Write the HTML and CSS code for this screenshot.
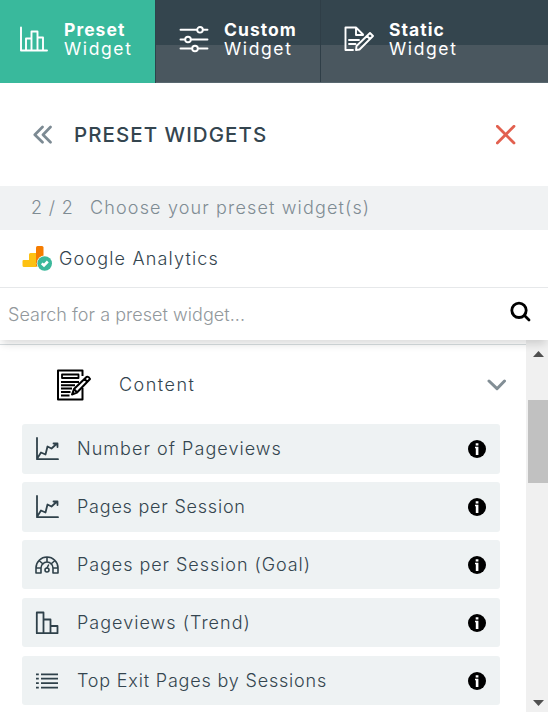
FILE: index.html
```html
<!DOCTYPE html>
<html lang="en">
<head>
  <meta charset="utf-8">
  <title>Preset Widgets</title>
  <link rel="stylesheet" href="styles.css">
</head>
<body>
  <svg class="symbols">
    <symbol id="line-chart" viewBox="0 0 24 24">
      <path d="M2 1V22.200H23M2.500 21L6 15.500L10.500 17.500L12.500 9.500L16.500 11.500L22 6.500M18.500 6.500H22.500V10"/>
    </symbol>
    <symbol id="info" viewBox="0 0 18 18">
      <circle cx="9" cy="9" r="9" fill="#000" stroke="none"/>
      <path d="M7.700 3.300h2.700v2.200H7.700zM7 6.800h3.400v8.200H7.800V8.300H7z" fill="#fff" stroke="none"/>
    </symbol>
  </svg>

  <div class="tabs">
    <div class="tab active">
      <svg class="tab-icon" width="30" height="28" viewBox="0 0 30 28">
        <path d="M3 2.500V25.500H29M8 25V13.500H13.500M13.500 25V6.500H19.500V25M19.500 12.500H25V25"/>
      </svg>
      <div class="tab-text"><b>Preset</b><span>Widget</span></div>
    </div>
    <div class="tab custom">
      <svg class="tab-icon" width="30" height="28" viewBox="0 0 30 28">
        <path d="M1.500 4.800H18M24 4.800H28.500M1.500 14.500H6M12 14.500H28.500M1.500 23.500H13M19 23.500H28.500"/>
        <circle cx="21" cy="4.800" r="2.800"/>
        <circle cx="9" cy="14.500" r="2.800"/>
        <circle cx="16" cy="23.500" r="2.800"/>
      </svg>
      <div class="tab-text"><b>Custom</b><span>Widget</span></div>
    </div>
    <div class="tab static">
      <svg class="tab-icon" width="30" height="28" viewBox="0 0 30 28">
        <path d="M19 9.500L12 2.500H1.500V25H9M12 2.500V10H19M5 15H15M5 19H11.500M12 25L12.500 21L26 8L29 11L15.500 24.500L12 25M23 11L26 14"/>
      </svg>
      <div class="tab-text"><b>Static</b><span>Widget</span></div>
    </div>
  </div>

  <div class="title-bar">
    <svg class="back" width="20" height="20" viewBox="0 0 20 20">
      <path d="M10.500 2L2.800 9.700L10.500 17.200M18.500 2L11 9.700L18.500 17.200"/>
    </svg>
    <h1>PRESET WIDGETS</h1>
    <svg class="close" width="20" height="20" viewBox="0 0 20 20">
      <path d="M1.300 1.300L18 18M18 1.300L1.300 18"/>
    </svg>
  </div>

  <div class="step">
    <span class="count">2 / 2</span>
    <span class="choose">Choose your preset widget(s)</span>
  </div>

  <div class="source">
    <svg width="32" height="28" viewBox="0 0 32 28">
      <rect x="14" y="1" width="7.500" height="21" rx="1.500" fill="#f57c00"/>
      <path d="M8.500 8H14V22H2Q.500 22 .500 20.500V16Q.500 15 1.500 15H7V9.500Q7 8 8.500 8Z" fill="#fdc113"/>
      <circle cx="22.700" cy="18.500" r="8" fill="#fff"/>
      <circle cx="22.700" cy="18.500" r="7.300" fill="#3bb89b"/>
      <path d="M19.800 18.300L22 20.500L25.800 16.500" fill="none" stroke="#fff" stroke-width="2.600"/>
    </svg>
    <span class="source-name">Google Analytics</span>
  </div>

  <div class="search">
    <input type="text" placeholder="Search for a preset widget...">
    <svg width="22" height="22" viewBox="0 0 22 22">
      <circle cx="10" cy="9.300" r="7.200"/>
      <path d="M15.500 14.500L20 19"/>
    </svg>
  </div>

  <div class="panel">
    <div class="list">
      <div class="group">
        <svg class="group-icon" width="36" height="34" viewBox="0 0 36 34">
          <path d="M26.500 8V2.500H2V31.500H26.500V20" stroke-width="2"/>
          <path d="M6 6.500H22.500V10H6Z" stroke-width="1.800"/>
          <path d="M5 14H23M5 17.200H19M5 20.500H16M5 24H14.500M5 27.500H13.500" stroke-width="1.900"/>
          <path d="M16 26.500L18 21L30.500 9Q32.500 8 34 11L21 24.500ZM28.500 11L31.500 14M18 21L21 24.500" stroke-width="2" fill="#fff"/>
        </svg>
        <span class="group-name">Content</span>
        <svg class="arrow" width="20" height="13" viewBox="0 0 20 13">
          <path d="M2 2L10 9.700L17.500 2"/>
        </svg>
      </div>

      <div class="widget">
        <svg class="widget-icon"><use href="#line-chart"/></svg>
        <span class="pageviews">Number of Pageviews</span>
        <svg class="info"><use href="#info"/></svg>
      </div>
      <div class="widget">
        <svg class="widget-icon"><use href="#line-chart"/></svg>
        <span class="session">Pages per Session</span>
        <svg class="info"><use href="#info"/></svg>
      </div>
      <div class="widget">
        <svg class="widget-icon gauge" viewBox="0 0 24 24">
          <path d="M1 20V15A11 11 0 0 1 23 15V20H18V15A6 6 0 0 0 6 15V20ZM1 15H6M18 15H23M4 7.500L8 11M20 7.500L16 11M12 4V9M12 15L13.500 12"/>
          <circle cx="12" cy="17" r="2"/>
        </svg>
        <span class="goal">Pages per Session (Goal)</span>
        <svg class="info"><use href="#info"/></svg>
      </div>
      <div class="widget">
        <svg class="widget-icon" viewBox="0 0 24 24">
          <path d="M1.800 1.500H8.500V22.200H1.800ZM8.500 8.500H15.500V22.200H8.500ZM15.500 15H22.500V22.200H15.500Z"/>
        </svg>
        <span class="trend">Pageviews (Trend)</span>
        <svg class="info"><use href="#info"/></svg>
      </div>
      <div class="widget">
        <svg class="widget-icon rows" viewBox="0 0 24 24">
          <path d="M1 5.300H3.800M6 5.300H23M1 9.700H3.800M6 9.700H23M1 14.200H3.800M6 14.200H23M1 18.700H3.800M6 18.700H23"/>
        </svg>
        <span class="exit">Top Exit Pages by Sessions</span>
        <svg class="info"><use href="#info"/></svg>
      </div>
    </div>

    <div class="scrollbar">
      <svg width="11" height="6" viewBox="0 0 11 6"><path d="M0 6L5.500 0L11 6Z"/></svg>
      <div class="thumb"></div>
      <svg width="11" height="6" viewBox="0 0 11 6"><path d="M0 0L5.500 6L11 0Z"/></svg>
    </div>
  </div>
</body>
</html>
```
FILE: styles.css
```css
* {
  box-sizing: border-box;
}

body {
  margin: 0;
  height: 712px;
  overflow: hidden;
  display: flex;
  flex-direction: column;
  font-family: Inter, "Open Sans", sans-serif;
  font-size: 18px;
  font-weight: 300;
  line-height: 22px;
  color: #34454f;
  background-color: #fff;
}

span, h1, b {
  white-space: nowrap;
}

svg {
  flex: none;
}

.symbols {
  display: none;
}

.tabs {
  display: flex;
  flex: none;
  height: 83px;
  color: #fff;
  background: linear-gradient(#34454e 45px, #4a575f 45px);
  border-bottom: 1px solid #596870;
}

.tab {
  display: flex;
  height: 82px;
  padding: 20px 0 0 18px;
}

.tab.active {
  width: 156px;
  height: 83px;
  background-color: #39b99c;
  border-right: 1px solid #2c444b;
}

.tab.custom {
  width: 165px;
  padding-left: 23px;
  border-right: 1px solid #2f3e47;
}

.tab.static {
  padding-left: 23px;
}

.tab-icon {
  margin-top: 5px;
  fill: none;
  stroke: #fff;
  stroke-width: 1.9;
  stroke-linecap: round;
  stroke-linejoin: round;
}

.tab-text {
  margin-left: 16px;
  font-size: 17.5px;
  line-height: 19px;
}

.tab.custom .tab-text,
.tab.static .tab-text {
  margin-left: 15px;
}

.tab-text b,
.tab-text span {
  display: block;
}

.tab-text b {
  font-weight: 700;
  letter-spacing: 1.05px;
}

.tab-text span {
  font-weight: 400;
  letter-spacing: 1.6px;
}

.title-bar {
  display: flex;
  flex: none;
  align-items: center;
  height: 103px;
  padding: 0 32px;
}

.title-bar h1 {
  margin: 1px 0 0 22px;
  font-size: 20.5px;
  font-weight: 500;
  letter-spacing: 1.05px;
}

.back {
  fill: none;
  stroke: #7c8a93;
  stroke-width: 2.7;
  stroke-linecap: round;
  stroke-linejoin: round;
}

.close {
  margin-left: auto;
  stroke: #e2604f;
  stroke-width: 2.8;
  stroke-linecap: round;
}

.step {
  display: flex;
  flex: none;
  align-items: center;
  height: 44px;
  padding-left: 31px;
  color: #7f8c93;
  background-color: #f0f2f3;
}

.count {
  width: 59px;
  letter-spacing: 0.8px;
}

.choose {
  letter-spacing: 1.15px;
}

.source {
  display: flex;
  flex: none;
  align-items: center;
  height: 58px;
  padding-left: 22px;
  border-bottom: 1px solid #e6e8ea;
}

.source-name {
  margin-left: 5px;
  letter-spacing: 1.17px;
}

.search {
  position: relative;
  display: flex;
  flex: none;
  align-items: center;
  height: 52px;
  padding: 0 17px 4px 8px;
  background-color: #fff;
  box-shadow: 0 6px 8px -2px rgba(0, 0, 0, 0.14);
}

.search input {
  flex: 1;
  height: 30px;
  margin-top: 5px;
  padding: 0;
  border: none;
  outline: none;
  font: inherit;
}

.search input::placeholder {
  color: #92989c;
  letter-spacing: 0.04px;
}

.search svg {
  fill: none;
  stroke: #000;
  stroke-width: 2.8;
  stroke-linecap: round;
}

.panel {
  display: flex;
  flex: none;
  height: 372px;
}

.list {
  width: 526px;
  padding: 4px 26px 0 22px;
  background: linear-gradient(#d8dee1, #d8dee1) 0 4px / 100% 1px no-repeat;
}

.group {
  display: flex;
  align-items: center;
  height: 80.3px;
  padding-left: 34px;
}

.group-icon {
  margin-top: 1px;
  fill: none;
  stroke: #000;
  stroke-linejoin: round;
}

.group-name {
  margin: 2px 0 0 27px;
  letter-spacing: 1.5px;
}

.arrow {
  margin: 2px -7px 0 auto;
  fill: none;
  stroke: #828e95;
  stroke-width: 3;
  stroke-linecap: round;
  stroke-linejoin: round;
}

.widget {
  display: flex;
  align-items: center;
  height: 49.35px;
  margin-bottom: 8.55px;
  padding: 0.6px 14px 0 13px;
  border-radius: 3px;
  background-color: #eef2f3;
}

.widget span {
  margin-left: 18px;
}

.pageviews {
  letter-spacing: 1.04px;
}

.session {
  letter-spacing: 0.78px;
}

.goal {
  letter-spacing: 0.94px;
}

.trend {
  letter-spacing: 1.02px;
}

.exit {
  letter-spacing: 0.81px;
}

.widget-icon {
  width: 24px;
  height: 24px;
  fill: none;
  stroke: #2f414a;
  stroke-width: 1.8;
  stroke-linecap: round;
  stroke-linejoin: round;
}

.widget-icon.gauge {
  stroke-width: 1.6;
}

.widget-icon.rows {
  stroke-width: 1.8;
  stroke-linecap: butt;
}

.info {
  width: 18px;
  height: 18px;
  margin-left: auto;
}

.scrollbar {
  display: flex;
  flex-direction: column;
  align-items: center;
  width: 22px;
  padding: 11px 0 6px 2px;
  background-color: #f0f0f0;
  fill: #505050;
}

.thumb {
  width: 20px;
  height: 83px;
  margin: 43px 0 auto;
  background-color: #c1c1c1;
}
```
